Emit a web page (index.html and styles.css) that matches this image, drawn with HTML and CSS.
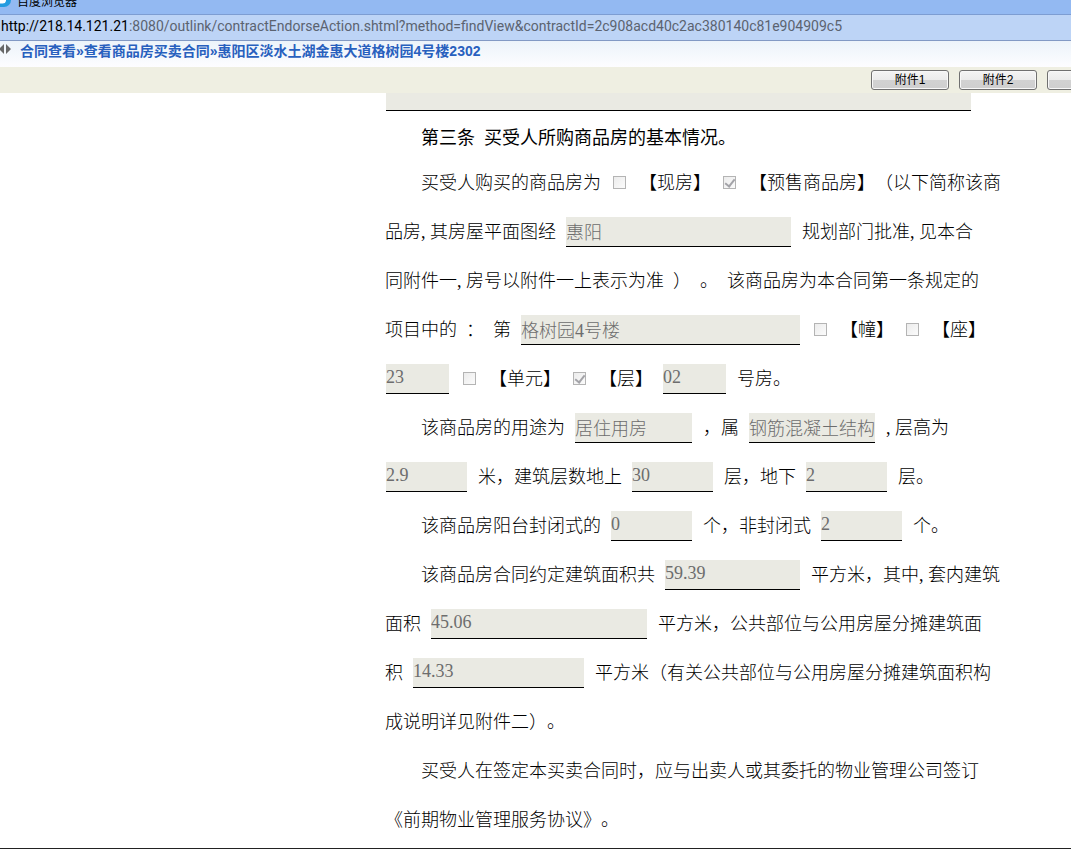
FILE: index.html
```html
<!DOCTYPE html>
<html lang="zh-CN">
<head>
<meta charset="utf-8">
<title>百度浏览器</title>
<link rel="stylesheet" href="styles.css">
</head>
<body>
<header class="titlebar">
  <svg class="logo" width="12" height="16" viewBox="0 0 12 16" aria-hidden="true"><path d="M0 0h11v5a7 7 0 0 1-7 7H0z" fill="#239be0"/><path d="M0 3h6v3a3.500 3 0 0 1-3.500 2.500H0z" fill="#fff"/></svg>
  <span class="app-name">百度浏览器</span>
</header>
<div class="address"><span class="host">http://218.14.121.21</span>:8080/outlink/contractEndorseAction.shtml?method=findView&amp;contractId=2c908acd40c2ac380140c81e904909c5</div>
<nav class="crumbs">
  <svg class="arrows" width="12" height="10" viewBox="0 0 12 10" aria-hidden="true"><path d="M4 0v10L-1 5zM6 0v10l5-5z" fill="#686868"/></svg>
  <span>合同查看»查看商品房买卖合同»惠阳区淡水土湖金惠大道格树园4号楼2302</span>
</nav>
<div class="toolbar">
  <button type="button" class="btn">附件1</button>
  <button type="button" class="btn">附件2</button>
  <button type="button" class="btn" aria-label="附件3"></button>
</div>
<main class="contract">
  <input class="field field-top" aria-label="备注" disabled>
  <h1 class="heading"><span>第三条</span><span>买受人所购商品房的基本情况。</span></h1>
  <div class="row indent"><span>买受人购买的商品房为</span><input type="checkbox" id="c1" class="check" disabled><label for="c1">【现房】</label><input type="checkbox" id="c2" class="check" checked disabled><span><label for="c2">【预售商品房】</label>（以下简称该商</span></div>
  <div class="row"><span>品房<span class="half">,</span>其房屋平面图经</span><input class="field w225" aria-label="规划部门" value="惠阳" disabled><span>规划部门批准<span class="half">,</span>见本合</span></div>
  <div class="row"><span>同附件一<span class="half">,</span>房号以附件一上表示为准</span><span>）</span><span>。</span><span>该商品房为本合同第一条规定的</span></div>
  <div class="row"><span>项目中的</span><span>：</span><span>第</span><input class="field w279" aria-label="楼栋" value="格树园4号楼" disabled><input type="checkbox" id="c3" class="check" disabled><label for="c3">【幢】</label><input type="checkbox" id="c4" class="check" disabled><label for="c4">【座】</label></div>
  <div class="row"><input class="field w63" aria-label="楼层" value="23" disabled><input type="checkbox" id="c5" class="check" disabled><label for="c5">【单元】</label><input type="checkbox" id="c6" class="check" checked disabled><label for="c6">【层】</label><input class="field w63" aria-label="房号" value="02" disabled><span>号房。</span></div>
  <div class="row indent"><span>该商品房的用途为</span><input class="field w117" aria-label="用途" value="居住用房" disabled><span>，属</span><input class="field w126" aria-label="结构" value="钢筋混凝土结构" disabled><span><span class="half">,</span>层高为</span></div>
  <div class="row"><input class="field w81" aria-label="层高" value="2.9" disabled><span>米，建筑层数地上</span><input class="field w81" aria-label="地上层数" value="30" disabled><span>层，地下</span><input class="field w81" aria-label="地下层数" value="2" disabled><span>层。</span></div>
  <div class="row indent"><span>该商品房阳台封闭式的</span><input class="field w81" aria-label="封闭式阳台" value="0" disabled><span>个，非封闭式</span><input class="field w81" aria-label="非封闭式阳台" value="2" disabled><span>个。</span></div>
  <div class="row indent"><span>该商品房合同约定建筑面积共</span><input class="field w135" aria-label="建筑面积" value="59.39" disabled><span>平方米，其中<span class="half">,</span>套内建筑</span></div>
  <div class="row"><span>面积</span><input class="field w216" aria-label="套内建筑面积" value="45.06" disabled><span>平方米，公共部位与公用房屋分摊建筑面</span></div>
  <div class="row"><span>积</span><input class="field w171" aria-label="分摊建筑面积" value="14.33" disabled><span>平方米（有关公共部位与公用房屋分摊建筑面积构</span></div>
  <div class="row"><span>成说明详见附件二）。</span></div>
  <div class="row indent"><span>买受人在签定本买卖合同时，应与出卖人或其委托的物业管理公司签订</span></div>
  <div class="row"><span>《前期物业管理服务协议》。</span></div>
</main>
<footer class="edge"></footer>
</body>
</html>
```
FILE: styles.css
```css
* { box-sizing: border-box; }
body {
  margin: 0;
  min-height: 100vh;
  display: flex;
  flex-direction: column;
  overflow: hidden;
  background: #fff;
  color: #000;
  font-family: "Liberation Serif", "Noto Sans CJK SC", sans-serif;
}
.titlebar {
  display: flex;
  align-items: flex-start;
  gap: 5px;
  height: 15px;
  overflow: hidden;
  background: #93b9f2;
  border-bottom: 1px solid #7d9dd2;
}
.logo { margin-top: -5px; }
.app-name {
  margin-top: -7px;
  font: 12px/16px "Noto Sans CJK SC", sans-serif;
}
.address {
  height: 26px;
  padding-left: 1px;
  background: #bdd4f6;
  border-bottom: 1px solid #8299c4;
  color: #5b6370;
  font: 14px/23px Roboto, "Noto Sans", sans-serif;
  white-space: nowrap;
}
.host { color: #000; }
.crumbs {
  display: flex;
  align-items: flex-start;
  gap: 8px;
  height: 26px;
  background: linear-gradient(#ecf3fa, #fdfdff);
  color: #2860be;
  font: bold 14px/20px "Liberation Sans", "Noto Sans CJK SC", sans-serif;
  white-space: nowrap;
}
.arrows { margin-top: 3px; }
.toolbar {
  display: flex;
  justify-content: flex-end;
  align-items: center;
  gap: 10px;
  height: 26px;
  overflow: hidden;
  background: #efefe2;
}
.btn {
  flex: none;
  width: 78px;
  height: 20px;
  padding: 0;
  border: 1px solid #707070;
  border-radius: 3px;
  background: linear-gradient(#f4f4f4, #ebebeb 50%, #d2d2d2 50%, #cfcfcf);
  box-shadow: inset 0 0 0 1px #f8f8f8;
  color: #000;
  font: 12px/18px "Liberation Sans", "Noto Sans CJK SC", sans-serif;
}
.btn:last-child { margin-right: -54px; }
.contract {
  flex: 1;
  padding-left: 385px;
  font-size: 18px;
  font-weight: 300;
  line-height: 26px;
  text-spacing-trim: space-all;
  white-space: nowrap;
}
.heading, .row {
  display: flex;
  align-items: center;
  gap: 9px;
  margin: 0;
}
.heading {
  height: 47px;
  padding: 7px 0 0 36px;
  font-size: 18px;
  font-weight: 400;
}
.row { height: 49px; }
.indent { padding-left: 36px; }
.half { display: inline-block; width: 9px; }
.field {
  height: 30px;
  margin: 0 2px 0 1px;
  padding: 0 0 1px;
  border: 0;
  border-bottom: 1px solid #000;
  border-radius: 0;
  background: #eaeae3;
  color: #6d6d6d;
  font: inherit;
}
.field-top { display: block; height: 18px; width: 585px; }
.w63 { width: 63px; }
.w81 { width: 81px; }
.w117 { width: 117px; }
.w126 { width: 126px; }
.w135 { width: 135px; }
.w171 { width: 171px; }
.w216 { width: 216px; }
.w225 { width: 225px; }
.w279 { width: 279px; }
.check {
  appearance: none;
  display: grid;
  place-items: center;
  width: 13px;
  height: 13px;
  margin: 0 4px 0 3px;
  border: 1px solid #b4b4b4;
  background: linear-gradient(135deg, #ececec, #fbfbfb);
}
.check:checked::before {
  content: "";
  width: 4px;
  height: 8px;
  margin-bottom: 2px;
  border: solid #a3a3a8;
  border-width: 0 2px 2px 0;
  transform: rotate(38deg);
}
.edge { height: 1px; background: #222; }
```
